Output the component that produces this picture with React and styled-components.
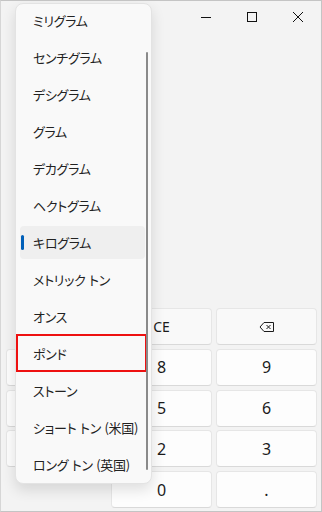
import React from "react";
import styled, { createGlobalStyle } from "styled-components";

const GlobalStyle = createGlobalStyle`
  html, body {
    margin: 0;
    padding: 0;
    background: #f3f3f3;
  }
  body {
    font-family: "Noto Sans", "Noto Sans CJK JP", sans-serif;
  }
`;

const Window = styled.div`
  position: relative;
  box-sizing: border-box;
  width: 322px;
  height: 512px;
  display: flex;
  flex-direction: column;
  background: #f3f3f3;
  border: 1px solid #c4c4c4;
  border-left-color: #d6d6d6;
  overflow: hidden;
`;

const TitleBar = styled.div`
  display: flex;
  justify-content: flex-end;
  height: 32px;
  flex: none;
`;

const CaptionButton = styled.div`
  width: 46px;
  height: 32px;
  display: flex;
  align-items: center;
  justify-content: center;
  color: #111;
`;

const Spacer = styled.div`
  flex: 1;
`;

const Keypad = styled.div`
  display: grid;
  grid-template-columns: repeat(3, 1fr);
  grid-template-rows: repeat(5, 37px);
  gap: 3.75px 4px;
  padding: 0 4px 3px 5px;
`;

const Key = styled.div`
  box-sizing: border-box;
  display: flex;
  align-items: center;
  justify-content: center;
  border-radius: 4px;
  border: 1px solid #e6e6e6;
  border-bottom-color: #d9d9d9;
  background: ${(p) => (p.$op ? "#f9f9f9" : "#fdfdfd")};
  color: #1b1b1b;
  font-size: ${(p) => (p.$op ? "14px" : "16px")};
`;

const Blank = styled.div``;

const Dropdown = styled.div`
  position: absolute;
  left: 14px;
  top: 2px;
  width: 137px;
  height: 481px;
  box-sizing: border-box;
  background: #f9f9f9;
  border: 1px solid #e3e3e3;
  border-radius: 8px;
  box-shadow: 0 6px 14px rgba(0, 0, 0, 0.12);
  overflow: hidden;
`;

const List = styled.ul`
  list-style: none;
  margin: 0;
  padding: 0 6px 0 4px;
  display: flex;
  flex-direction: column;
  gap: 4px;
`;

const Item = styled.li`
  position: relative;
  height: 33px;
  display: flex;
  align-items: center;
  padding-left: 13px;
  border-radius: 4px;
  font-family: "Noto Sans CJK JP", sans-serif;
  font-feature-settings: "palt";
  font-size: 13px;
  line-height: 16px;
  letter-spacing: -0.3px;
  word-spacing: 1px;
  color: #222;
  white-space: nowrap;
  background: ${(p) => (p.$selected ? "#efefef" : "transparent")};

  &::before {
    content: "";
    display: ${(p) => (p.$selected ? "block" : "none")};
    position: absolute;
    left: 1px;
    top: 50%;
    width: 3px;
    height: 15px;
    margin-top: -8px;
    border-radius: 2px;
    background: #005fb8;
  }

  &::after {
    content: "";
    display: ${(p) => (p.$marked ? "block" : "none")};
    position: absolute;
    left: -4px;
    right: -2px;
    top: -3px;
    bottom: -2px;
    border: 2px solid #ee1111;
  }
`;

const ScrollThumb = styled.div`
  position: absolute;
  left: 130px;
  top: 48px;
  width: 2px;
  height: 418px;
  border-radius: 1px;
  background: #8a8a8a;
`;

const units = [
  "ミリグラム",
  "センチグラム",
  "デシグラム",
  "グラム",
  "デカグラム",
  "ヘクトグラム",
  "キログラム",
  "メトリック トン",
  "オンス",
  "ポンド",
  "ストーン",
  "ショート トン (米国)",
  "ロング トン (英国)",
];

const keys = [
  null, { label: "CE", op: true }, { label: "back", op: true },
  { label: "7" }, { label: "8" }, { label: "9" },
  { label: "4" }, { label: "5" }, { label: "6" },
  { label: "1" }, { label: "2" }, { label: "3" },
  null, { label: "0" }, { label: "." },
];

const BackspaceIcon = () => (
  <svg width="16" height="12" viewBox="0 0 16 12" fill="none" stroke="#1b1b1b" strokeWidth="1">
    <path d="M5 1.5 H14.5 V10.5 H5 L1 6 Z" strokeLinejoin="round" />
    <path d="M7.5 4 L11.5 8 M11.5 4 L7.5 8" />
  </svg>
);

function App() {
  return (
    <>
      <GlobalStyle />
      <Window>
        <TitleBar>
          <CaptionButton>
            <svg width="10" height="10" viewBox="0 0 10 10">
              <path d="M0 5.5 H10" stroke="#111" strokeWidth="1" />
            </svg>
          </CaptionButton>
          <CaptionButton>
            <svg width="10" height="10" viewBox="0 0 10 10">
              <rect x="0.5" y="0.5" width="9" height="9" fill="none" stroke="#111" strokeWidth="1" />
            </svg>
          </CaptionButton>
          <CaptionButton>
            <svg width="10" height="10" viewBox="0 0 10 10">
              <path d="M0 0 L10 10 M10 0 L0 10" stroke="#111" strokeWidth="1" />
            </svg>
          </CaptionButton>
        </TitleBar>
        <Spacer />
        <Keypad>
          {keys.map((k, i) =>
            k ? (
              <Key key={i} $op={k.op}>
                {k.label === "back" ? <BackspaceIcon /> : k.label}
              </Key>
            ) : (
              <Blank key={i} />
            )
          )}
        </Keypad>
        <Dropdown>
          <List>
            {units.map((u) => (
              <Item key={u} $selected={u === "キログラム"} $marked={u === "ポンド"}>
                {u}
              </Item>
            ))}
          </List>
          <ScrollThumb />
        </Dropdown>
      </Window>
    </>
  );
}

export default App;
